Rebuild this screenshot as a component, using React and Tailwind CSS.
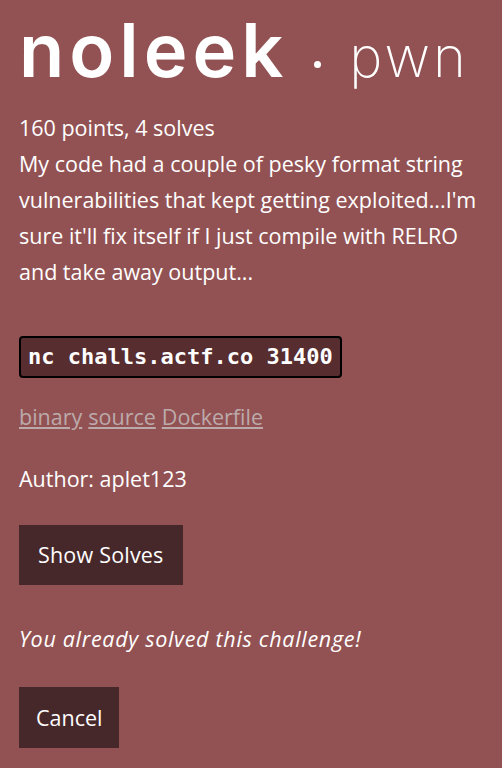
import React from 'react';

const LINKS = ['binary', 'source', 'Dockerfile'];

const App = () => {
  return (
    <div className="min-h-[768px] w-full bg-[#925253] text-white px-[19px] pt-[2px] font-['Open_Sans',sans-serif] text-[21.5px] leading-[36px]">
      {/* Title */}
      <h1 className="flex items-baseline h-[96px] pt-[11px]">
        <span className="font-['Inter',sans-serif] font-semibold text-[74px] leading-none tracking-[5px]">noleek</span>
        <span className="inline-block w-[7px] h-[7px] rounded-full bg-white ml-[26px] mr-[28px] self-center mt-[18px]" />
        <span className="font-['Inter',sans-serif] font-extralight text-[56px] leading-none tracking-[3px]">pwn</span>
      </h1>

      <p className="mt-[12px]">160 points, 4 solves</p>

      <p>
        My code had a couple of pesky format string vulnerabilities that kept getting exploited...I'm sure it'll fix itself if I just compile with RELRO and take away output...
      </p>

      <div className="mt-[46px]">
        <code className="inline-block bg-[#572d2f] border-2 border-black rounded-[4px] px-[7px] h-[42px] leading-[38px] font-['DejaVu_Sans_Mono',monospace] font-bold text-[22px]">
          nc challs.actf.co 31400
        </code>
      </div>

      <div className="mt-[21px] flex gap-[6px]">
        {LINKS.map(l => (
          <a key={l} href="#" className="text-[#bcaaab] underline">{l}</a>
        ))}
      </div>

      <p className="mt-[26px]">Author: aplet123</p>

      <button className="mt-[28px] block bg-[#47282a] h-[60px] px-[19px] tracking-[0.2px]">Show Solves</button>

      <p className="mt-[36px] italic tracking-[0.7px]">You already solved this challenge!</p>

      <button className="mt-[30px] block bg-[#47282a] h-[61px] px-[17px]">Cancel</button>
    </div>
  );
};

export default App;
